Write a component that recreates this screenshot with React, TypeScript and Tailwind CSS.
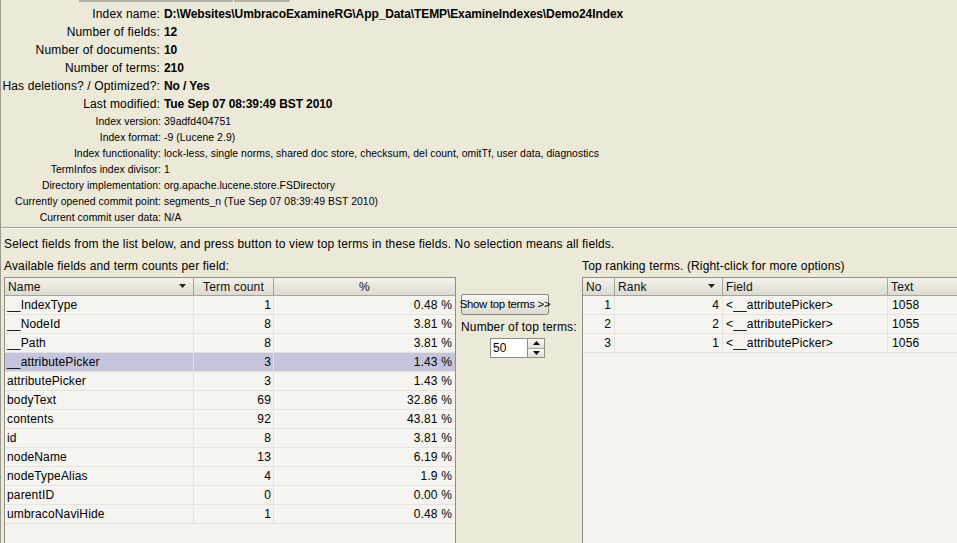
import React from "react";

const font = { fontFamily: '"Liberation Sans", Arial, sans-serif' };

const bigRows: [string, string][] = [
  ["Index name:", "D:\\Websites\\UmbracoExamineRG\\App_Data\\TEMP\\ExamineIndexes\\Demo24Index"],
  ["Number of fields:", "12"],
  ["Number of documents:", "10"],
  ["Number of terms:", "210"],
  ["Has deletions? / Optimized?:", "No / Yes"],
  ["Last modified:", "Tue Sep 07 08:39:49 BST 2010"],
];

const smallRows: [string, string][] = [
  ["Index version:", "39adfd404751"],
  ["Index format:", "-9 (Lucene 2.9)"],
  ["Index functionality:", "lock-less, single norms, shared doc store, checksum, del count, omitTf, user data, diagnostics"],
  ["TermInfos index divisor:", "1"],
  ["Directory implementation:", "org.apache.lucene.store.FSDirectory"],
  ["Currently opened commit point:", "segments_n (Tue Sep 07 08:39:49 BST 2010)"],
  ["Current commit user data:", "N/A"],
];

const fields: [string, string, string][] = [
  ["__IndexType", "1", "0.48 %"],
  ["__NodeId", "8", "3.81 %"],
  ["__Path", "8", "3.81 %"],
  ["__attributePicker", "3", "1.43 %"],
  ["attributePicker", "3", "1.43 %"],
  ["bodyText", "69", "32.86 %"],
  ["contents", "92", "43.81 %"],
  ["id", "8", "3.81 %"],
  ["nodeName", "13", "6.19 %"],
  ["nodeTypeAlias", "4", "1.9 %"],
  ["parentID", "0", "0.00 %"],
  ["umbracoNaviHide", "1", "0.48 %"],
];

const terms: [string, string, string, string][] = [
  ["1", "4", "<__attributePicker>", "1058"],
  ["2", "2", "<__attributePicker>", "1055"],
  ["3", "1", "<__attributePicker>", "1056"],
];

function SortArrow() {
  return (
    <svg width="8" height="5" viewBox="0 0 8 5" className="shrink-0">
      <path d="M0 0 H7 L3.5 4 Z" fill="#222" />
    </svg>
  );
}

const headCell =
  "h-full flex items-center border-r border-[#a5a59c] bg-gradient-to-b from-[#f3f2ec] to-[#dcdad0] text-[12px] text-[#111] px-[3px]";

export default function App() {
  return (
    <div
      className="w-[957px] h-[543px] overflow-hidden bg-[#ece9d8] text-black relative border-l border-[#9a9a90] tracking-[0.15px]"
      style={font}
    >
      {/* tab strip remnant */}
      <div className="absolute left-[78px] top-0 flex h-[2px]">
        <div className="w-[155px] h-full bg-[#b4b2a6] border-r border-[#f8f8f0]" />
        <div className="w-[57px] h-full bg-[#b4b2a6] border-r border-[#f8f8f0]" />
      </div>

      {/* top info */}
      <div className="pt-[5px]">
        {bigRows.map(([l, v]) => (
          <div key={l} className="flex h-[18px] items-center text-[12px]">
            <div className="w-[159px] shrink-0 text-right whitespace-nowrap">{l}</div>
            <div className="pl-[4px] font-bold whitespace-nowrap tracking-[-0.1px]">{v}</div>
          </div>
        ))}
        <div className="pt-[1px]">
          {smallRows.map(([l, v]) => (
            <div key={l} className="flex h-[16px] items-center text-[10.4px] tracking-[0.05px]">
              <div className="w-[160px] shrink-0 text-right whitespace-nowrap">{l}</div>
              <div className="pl-[3px] whitespace-nowrap">{v}</div>
            </div>
          ))}
        </div>
      </div>

      {/* separator */}
      <div className="mt-[1px] h-[2px] border-t border-[#a6a49a] border-b border-b-[#fbfaf5]" />

      <div className="h-[16px] mt-[7px] flex items-center pl-[3px] text-[12px] whitespace-nowrap">
        Select fields from the list below, and press button to view top terms in these fields. No selection means all fields.
      </div>

      <div className="flex mt-[6px]">
        {/* left panel */}
        <div className="w-[452px] ml-[3px] shrink-0">
          <div className="h-[16px] flex items-center text-[12px] whitespace-nowrap">
            Available fields and term counts per field:
          </div>
          <div className="mt-[3px] h-[300px] border border-[#8f8f86] bg-[#f4f3ee]">
            <div className="flex h-[18px] border-b border-[#a5a59c]">
              <div className={headCell + " w-[189px] justify-between"}>
                <span>Name</span>
                <span className="pr-[3px]"><SortArrow /></span>
              </div>
              <div className={headCell + " w-[80px] justify-center"}>Term count</div>
              <div className={headCell + " flex-1 justify-center border-r-0"}>%</div>
            </div>
            {fields.map(([n, c, p]) => {
              const sel = n === "__attributePicker";
              return (
                <div
                  key={n}
                  className={
                    "flex h-[19px] text-[12px] border-b border-[#e6e4da] " +
                    (sel ? "bg-[#c4c5dd]" : "bg-[#f5f4f0]")
                  }
                >
                  <div className="w-[189px] px-[2px] flex items-center border-r border-[#e6e4da]">{n}</div>
                  <div className="w-[80px] px-[2px] flex items-center justify-end border-r border-[#e6e4da]">{c}</div>
                  <div className="flex-1 px-[3px] flex items-center justify-end">{p}</div>
                </div>
              );
            })}
          </div>
        </div>

        {/* middle */}
        <div className="w-[126px] shrink-0 pl-[5px] pt-[36px]">
          <button className="w-[88px] h-[21px] p-0 rounded-[2px] border border-[#8a8a82] bg-gradient-to-b from-[#fbfbf8] to-[#dbd9cf] text-[11.4px] tracking-[-0.3px] whitespace-nowrap flex items-center justify-center">
            Show top terms &gt;&gt;
          </button>
          <div className="h-[16px] mt-[4px] flex items-center text-[12px] whitespace-nowrap">
            Number of top terms:
          </div>
          <div className="flex mt-[3px] ml-[29px] h-[20px]">
            <div className="w-[37px] h-full bg-white border border-[#8f8f86] border-r-0 text-[12px] flex items-center pl-[2px]">
              50
            </div>
            <div className="w-[18px] h-full flex flex-col border border-[#8f8f86]">
              <div className="flex-1 flex items-center justify-center bg-gradient-to-b from-[#fbfbf8] to-[#e0ded4] border-b border-[#a5a59c]">
                <svg width="7" height="4" viewBox="0 0 7 4"><path d="M3.5 0 L7 4 H0 Z" fill="#111" /></svg>
              </div>
              <div className="flex-1 flex items-center justify-center bg-gradient-to-b from-[#fbfbf8] to-[#e0ded4]">
                <svg width="7" height="4" viewBox="0 0 7 4"><path d="M0 0 H7 L3.5 4 Z" fill="#111" /></svg>
              </div>
            </div>
          </div>
        </div>

        {/* right panel */}
        <div className="flex-1">
          <div className="h-[16px] flex items-center text-[12px] whitespace-nowrap">
            Top ranking terms. (Right-click for more options)
          </div>
          <div className="mt-[3px] h-[300px] border border-r-0 border-[#8f8f86] bg-[#f4f3ee]">
            <div className="flex h-[18px] border-b border-[#a5a59c]">
              <div className={headCell + " w-[32px]"}>No</div>
              <div className={headCell + " w-[108px] justify-between"}>
                <span>Rank</span>
                <span className="pr-[3px]"><SortArrow /></span>
              </div>
              <div className={headCell + " w-[165px]"}>Field</div>
              <div className={headCell + " flex-1 border-r-0"}>Text</div>
            </div>
            {terms.map(([no, r, f, t]) => (
              <div key={no} className="flex h-[19px] text-[12px] border-b border-[#e6e4da] bg-[#f5f4f0]">
                <div className="w-[32px] px-[3px] flex items-center justify-end border-r border-[#e6e4da]">{no}</div>
                <div className="w-[108px] px-[3px] flex items-center justify-end border-r border-[#e6e4da]">{r}</div>
                <div className="w-[165px] px-[3px] flex items-center border-r border-[#e6e4da] whitespace-nowrap">{f}</div>
                <div className="flex-1 px-[4px] flex items-center">{t}</div>
              </div>
            ))}
          </div>
        </div>
      </div>
    </div>
  );
}
